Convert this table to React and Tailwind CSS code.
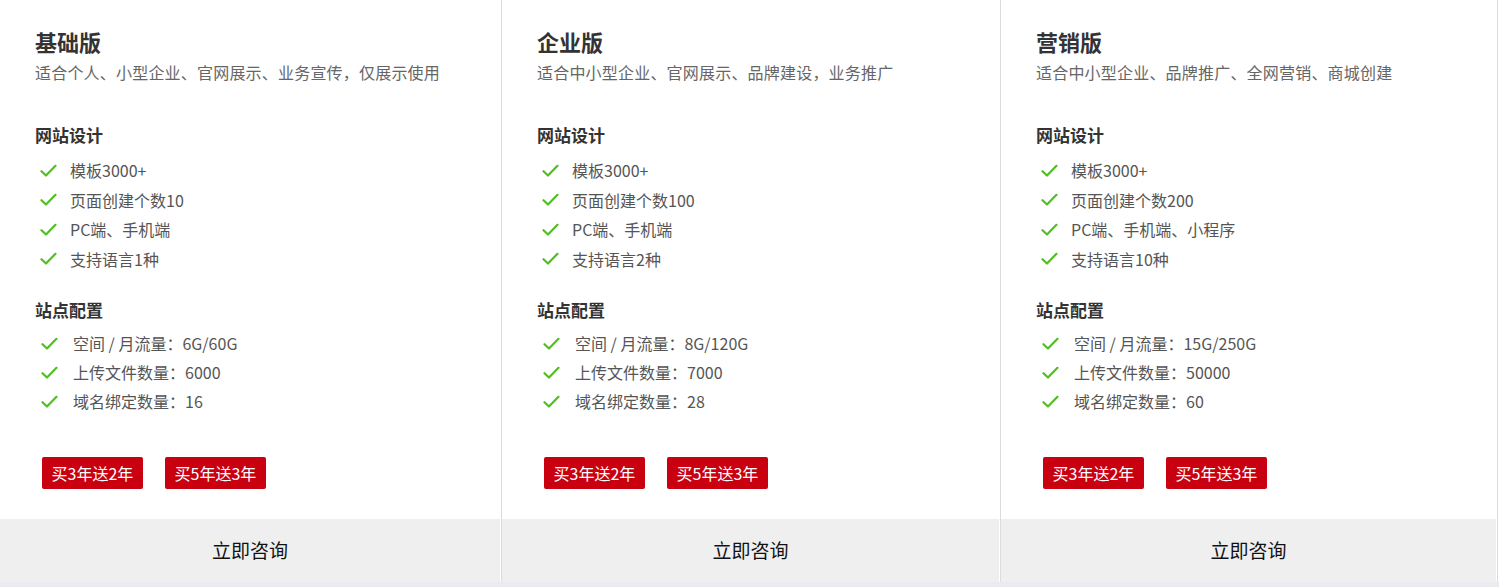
import React from "react";

const plans = [
  {
    name: "基础版",
    desc: "适合个人、小型企业、官网展示、业务宣传，仅展示使用",
    design: ["模板3000+", "页面创建个数10", "PC端、手机端", "支持语言1种"],
    config: ["空间 / 月流量：6G/60G", "上传文件数量：6000", "域名绑定数量：16"],
  },
  {
    name: "企业版",
    desc: "适合中小型企业、官网展示、品牌建设，业务推广",
    design: ["模板3000+", "页面创建个数100", "PC端、手机端", "支持语言2种"],
    config: ["空间 / 月流量：8G/120G", "上传文件数量：7000", "域名绑定数量：28"],
  },
  {
    name: "营销版",
    desc: "适合中小型企业、品牌推广、全网营销、商城创建",
    design: ["模板3000+", "页面创建个数200", "PC端、手机端、小程序", "支持语言10种"],
    config: ["空间 / 月流量：15G/250G", "上传文件数量：50000", "域名绑定数量：60"],
  },
];

const Check = () => (
  <svg width="17" height="14" viewBox="0 0 17 14" className="shrink-0">
    <path d="M1.5 7.2 L6 11.5 L15.5 1.8" fill="none" stroke="#4fbf1f" strokeWidth="2.2" strokeLinecap="round" strokeLinejoin="round" />
  </svg>
);

const PlanCard = ({ plan }) => (
  <div className="flex flex-col border-r border-[#dcdcdc]">
    <div className="pl-[35px] pt-[26px]">
      <h2 className="text-[22px] leading-[30px] font-bold text-[#333]">{plan.name}</h2>
      <p className="mt-[4px] text-[16px] leading-[24px] tracking-[0.2px] text-[#666]">{plan.desc}</p>

      <h3 className="mt-[38px] text-[17px] leading-[26px] font-bold text-[#333]">网站设计</h3>
      <ul className="mt-[8px]">
        {plan.design.map((item) => (
          <li key={item} className="flex items-center gap-[13px] pl-[5px] text-[16px] leading-[29.5px] text-[#555]">
            <Check />
            <span>{item}</span>
          </li>
        ))}
      </ul>

      <h3 className="mt-[23px] text-[17px] leading-[26px] font-bold text-[#333]">站点配置</h3>
      <ul className="mt-[6px]">
        {plan.config.map((item) => (
          <li key={item} className="flex items-center gap-[15px] pl-[6px] text-[16px] leading-[29px] text-[#555]">
            <Check />
            <span>{item}</span>
          </li>
        ))}
      </ul>

      <div className="mt-[41px] flex gap-[22px] pl-[7px]">
        <button className="h-[32px] w-[101px] rounded-[2px] bg-[#c9000f] text-[16px] leading-[32px] text-white">买3年送2年</button>
        <button className="h-[32px] w-[101px] rounded-[2px] bg-[#c9000f] text-[16px] leading-[32px] text-white">买5年送3年</button>
      </div>
    </div>

    <button className="mt-[30px] mr-px flex h-[63px] items-center justify-center bg-[#efefef] text-[19px] text-[#111]">
      立即咨询
    </button>
  </div>
);

export default function App() {
  return (
    <div className="w-[1499px] bg-white" style={{ fontFamily: '"Noto Sans CJK SC", "Noto Sans", sans-serif' }}>
      <div className="grid grid-cols-[502px_499px_497px]">
        {plans.map((plan) => (
          <PlanCard key={plan.name} plan={plan} />
        ))}
      </div>
      <div className="h-[5px] bg-[#e9ebee]" />
    </div>
  );
}
